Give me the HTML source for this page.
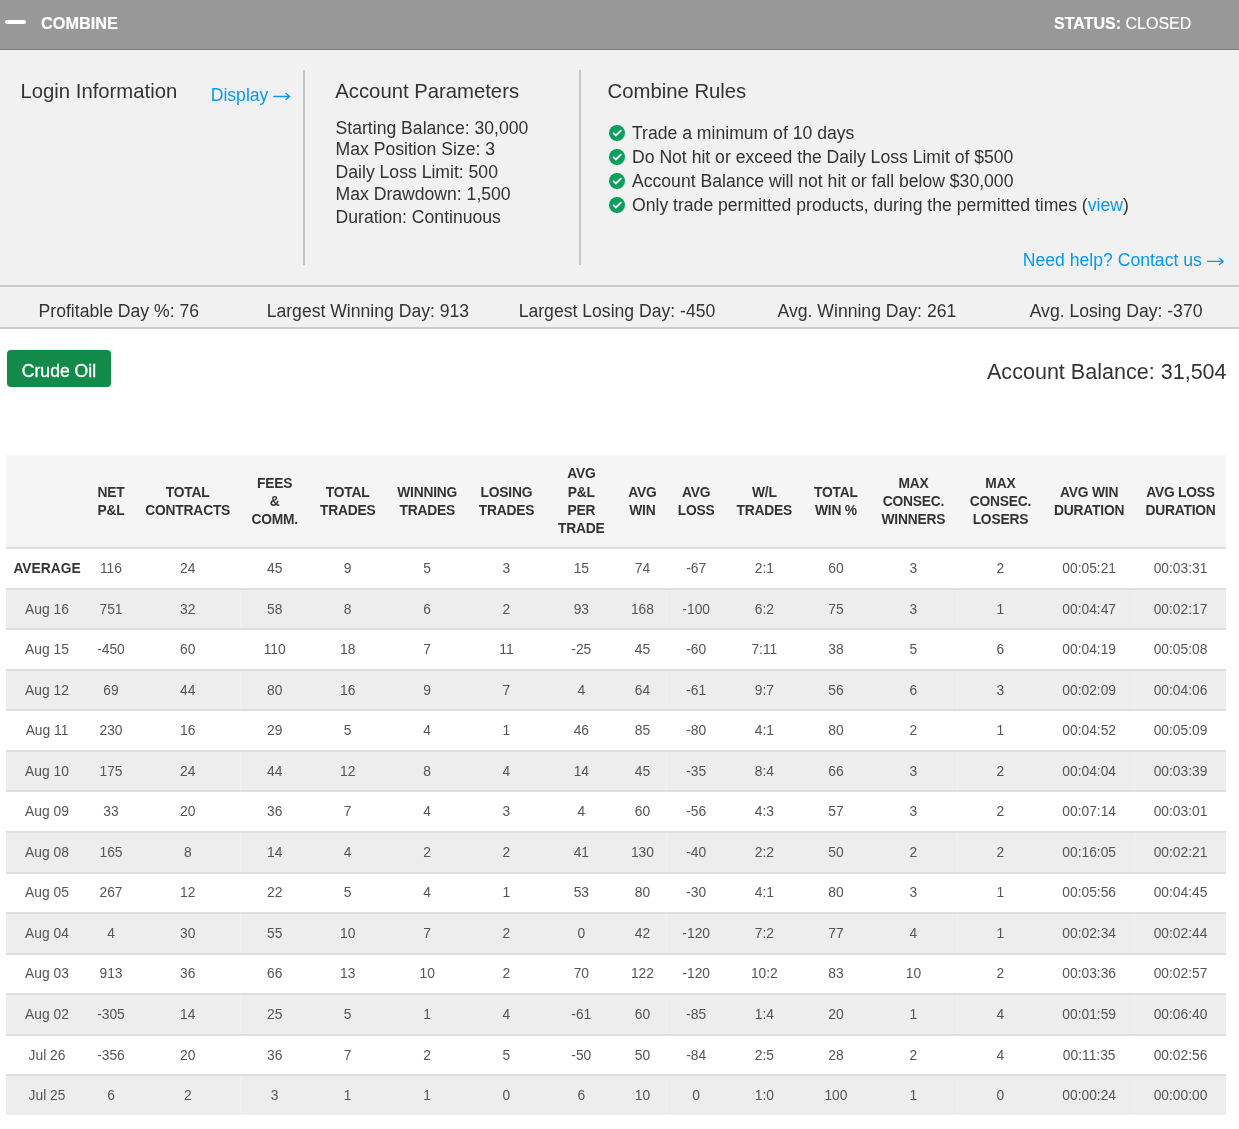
<!DOCTYPE html>
<html><head><meta charset="utf-8"><title>Combine</title><style>
html,body{margin:0;padding:0;width:1239px;height:1129px;overflow:hidden;background:#fff;font-family:"Liberation Sans",sans-serif;color:#333}
#root{position:absolute;left:0;top:0;width:1239px;height:1129px;will-change:transform}
.t{position:absolute;white-space:nowrap;line-height:normal}
table.g{border-collapse:separate;table-layout:fixed;border-spacing:0}
table.g th{background:#f5f5f5;height:94.2px;padding:0;font-size:13.8px;font-weight:700;color:#333;line-height:18.2px;letter-spacing:-0.2px;padding-top:1.6px;text-align:center;vertical-align:middle;border-bottom:2px solid #dedede;box-sizing:border-box}
table.g td{height:40.55px;padding:0;font-size:13.8px;color:#555;text-align:center;vertical-align:middle;border-bottom:2px solid #dedede;box-sizing:border-box}
table.g tr.k td{background:#ededed}
table.g tr:last-child td{border-bottom:none;height:38.5px}
table.g td:last-child,table.g th:last-child{padding-right:1.8px}
table.g td.avg{font-weight:700;color:#333}
</style></head><body><div id="root">
<div style="position:absolute;left:0;top:0;width:1239px;height:48.5px;background:#989898;border-bottom:1.5px solid #7b7b7b"></div>
<div style="position:absolute;left:5px;top:20px;width:21px;height:4.3px;background:#fff;border-radius:2.2px"></div>
<div class="t" style="left:41.00px;top:14.29px;font-size:16.25px;color:#fff;font-weight:700;-webkit-text-stroke:0.2px #fff">COMBINE</div>
<div class="t" style="left:1054.10px;top:14.62px;font-size:16px;color:#fff;font-weight:400;-webkit-text-stroke:0.2px #fff"><b>STATUS:</b> CLOSED</div>
<div style="position:absolute;left:0;top:50px;width:1239px;height:235.5px;background:#f1f1f1"></div>
<div style="position:absolute;left:0;top:285px;width:1239px;height:2px;background:#cbcbcb"></div>
<div style="position:absolute;left:0;top:287px;width:1239px;height:40px;background:#f1f1f1"></div>
<div style="position:absolute;left:0;top:327px;width:1239px;height:2px;background:#cbcbcb"></div>
<div class="t" style="left:20.50px;top:79.88px;font-size:20.3px;color:#333;font-weight:400;">Login Information</div>
<div class="t" style="left:210.70px;top:84.77px;font-size:17.6px;color:#0598f8;font-weight:400;">Display</div>
<svg style="position:absolute;left:273px;top:91px" width="20" height="12" viewBox="0 0 20 12"><path d="M0.80 5.50 H16.50 M13.00 2.40 L16.70 5.50 L13.00 8.60" stroke="#0598f8" stroke-width="1.35" fill="none" stroke-linecap="round" stroke-linejoin="round"/></svg>
<div style="position:absolute;left:303.4px;top:69.7px;width:1.5px;height:195px;background:#c4c4c4"></div>
<div class="t" style="left:335.30px;top:79.63px;font-size:20.3px;color:#333;font-weight:400;">Account Parameters</div>
<div class="t" style="left:335.60px;top:118.27px;font-size:17.6px;color:#333;font-weight:400;">Starting Balance: 30,000</div>
<div class="t" style="left:335.60px;top:138.57px;font-size:17.6px;color:#333;font-weight:400;">Max Position Size: 3</div>
<div class="t" style="left:335.60px;top:162.17px;font-size:17.6px;color:#333;font-weight:400;">Daily Loss Limit: 500</div>
<div class="t" style="left:335.60px;top:184.37px;font-size:17.6px;color:#333;font-weight:400;">Max Drawdown: 1,500</div>
<div class="t" style="left:335.60px;top:207.37px;font-size:17.6px;color:#333;font-weight:400;">Duration: Continuous</div>
<div style="position:absolute;left:579.2px;top:69.7px;width:1.5px;height:195px;background:#c4c4c4"></div>
<div class="t" style="left:607.60px;top:79.93px;font-size:20.3px;color:#333;font-weight:400;">Combine Rules</div>
<svg style="position:absolute;left:609.1px;top:125px" width="16" height="16" viewBox="0 0 16 16"><circle cx="8" cy="8" r="8" fill="#08a05a"/><path d="M4.1 7.9 L6.9 10.4 L12.3 5.1" stroke="#fff" stroke-width="1.9" fill="none"/></svg>
<div class="t" style="left:632.00px;top:123.07px;font-size:17.6px;color:#333;font-weight:400;">Trade a minimum of 10 days</div>
<svg style="position:absolute;left:609.1px;top:149px" width="16" height="16" viewBox="0 0 16 16"><circle cx="8" cy="8" r="8" fill="#08a05a"/><path d="M4.1 7.9 L6.9 10.4 L12.3 5.1" stroke="#fff" stroke-width="1.9" fill="none"/></svg>
<div class="t" style="left:632.00px;top:147.27px;font-size:17.6px;color:#333;font-weight:400;">Do Not hit or exceed the Daily Loss Limit of $500</div>
<svg style="position:absolute;left:609.1px;top:173px" width="16" height="16" viewBox="0 0 16 16"><circle cx="8" cy="8" r="8" fill="#08a05a"/><path d="M4.1 7.9 L6.9 10.4 L12.3 5.1" stroke="#fff" stroke-width="1.9" fill="none"/></svg>
<div class="t" style="left:632.00px;top:171.07px;font-size:17.6px;color:#333;font-weight:400;">Account Balance will not hit or fall below $30,000</div>
<svg style="position:absolute;left:609.1px;top:197px" width="16" height="16" viewBox="0 0 16 16"><circle cx="8" cy="8" r="8" fill="#08a05a"/><path d="M4.1 7.9 L6.9 10.4 L12.3 5.1" stroke="#fff" stroke-width="1.9" fill="none"/></svg>
<div class="t" style="left:632.00px;top:195.47px;font-size:17.6px;color:#333;font-weight:400;">Only trade permitted products, during the permitted times (<span style="color:#0598f8">view</span>)</div>
<div class="t" style="left:1022.80px;top:249.77px;font-size:17.6px;color:#0598f8;font-weight:400;">Need help? Contact us</div>
<svg style="position:absolute;left:1207px;top:256px" width="20" height="12" viewBox="0 0 20 12"><path d="M0.30 5.40 H16.00 M12.50 2.30 L16.20 5.40 L12.50 8.50" stroke="#0598f8" stroke-width="1.35" fill="none" stroke-linecap="round" stroke-linejoin="round"/></svg>
<div class="t" style="left:38.60px;top:300.77px;font-size:17.6px;color:#333;font-weight:400;">Profitable Day %: 76</div>
<div class="t" style="left:266.70px;top:300.77px;font-size:17.6px;color:#333;font-weight:400;">Largest Winning Day: 913</div>
<div class="t" style="left:518.70px;top:300.77px;font-size:17.6px;color:#333;font-weight:400;">Largest Losing Day: -450</div>
<div class="t" style="left:777.60px;top:300.77px;font-size:17.6px;color:#333;font-weight:400;">Avg. Winning Day: 261</div>
<div class="t" style="left:1029.70px;top:300.77px;font-size:17.6px;color:#333;font-weight:400;">Avg. Losing Day: -370</div>
<div style="position:absolute;left:6.8px;top:350px;width:104.6px;height:37px;background:#128a4a;border-radius:4px"></div>
<div class="t" style="left:21.80px;top:360.87px;font-size:17.6px;color:#fff;font-weight:400;-webkit-text-stroke:0.3px #fff">Crude Oil</div>
<div class="t" style="left:987.00px;top:358.70px;font-size:21.55px;color:#333;font-weight:400;">Account Balance: 31,504</div>
<table class="g" style="position:absolute;left:6.2px;top:455px;width:1220.0px">
<colgroup><col style="width:81.6px"><col style="width:46.4px"><col style="width:107.1px"><col style="width:66.9px"><col style="width:79.1px"><col style="width:79.9px"><col style="width:78.6px"><col style="width:71.2px"><col style="width:51px"><col style="width:56.5px"><col style="width:79.8px"><col style="width:63.4px"><col style="width:91.6px"><col style="width:82.4px"><col style="width:95.1px"><col style="width:89.4px"></colgroup>
<tr class="h"><th></th><th>NET<br>P&amp;L</th><th>TOTAL<br>CONTRACTS</th><th>FEES<br>&amp;<br>COMM.</th><th>TOTAL<br>TRADES</th><th>WINNING<br>TRADES</th><th>LOSING<br>TRADES</th><th>AVG<br>P&amp;L<br>PER<br>TRADE</th><th>AVG<br>WIN</th><th>AVG<br>LOSS</th><th>W/L<br>TRADES</th><th>TOTAL<br>WIN %</th><th>MAX<br>CONSEC.<br>WINNERS</th><th>MAX<br>CONSEC.<br>LOSERS</th><th>AVG WIN<br>DURATION</th><th>AVG LOSS<br>DURATION</th></tr>
<tr class="w"><td class="avg">AVERAGE</td><td>116</td><td>24</td><td>45</td><td>9</td><td>5</td><td>3</td><td>15</td><td>74</td><td>-67</td><td>2:1</td><td>60</td><td>3</td><td>2</td><td>00:05:21</td><td>00:03:31</td></tr>
<tr class="k"><td>Aug 16</td><td>751</td><td>32</td><td>58</td><td>8</td><td>6</td><td>2</td><td>93</td><td>168</td><td>-100</td><td>6:2</td><td>75</td><td>3</td><td>1</td><td>00:04:47</td><td>00:02:17</td></tr>
<tr class="w"><td>Aug 15</td><td>-450</td><td>60</td><td>110</td><td>18</td><td>7</td><td>11</td><td>-25</td><td>45</td><td>-60</td><td>7:11</td><td>38</td><td>5</td><td>6</td><td>00:04:19</td><td>00:05:08</td></tr>
<tr class="k"><td>Aug 12</td><td>69</td><td>44</td><td>80</td><td>16</td><td>9</td><td>7</td><td>4</td><td>64</td><td>-61</td><td>9:7</td><td>56</td><td>6</td><td>3</td><td>00:02:09</td><td>00:04:06</td></tr>
<tr class="w"><td>Aug 11</td><td>230</td><td>16</td><td>29</td><td>5</td><td>4</td><td>1</td><td>46</td><td>85</td><td>-80</td><td>4:1</td><td>80</td><td>2</td><td>1</td><td>00:04:52</td><td>00:05:09</td></tr>
<tr class="k"><td>Aug 10</td><td>175</td><td>24</td><td>44</td><td>12</td><td>8</td><td>4</td><td>14</td><td>45</td><td>-35</td><td>8:4</td><td>66</td><td>3</td><td>2</td><td>00:04:04</td><td>00:03:39</td></tr>
<tr class="w"><td>Aug 09</td><td>33</td><td>20</td><td>36</td><td>7</td><td>4</td><td>3</td><td>4</td><td>60</td><td>-56</td><td>4:3</td><td>57</td><td>3</td><td>2</td><td>00:07:14</td><td>00:03:01</td></tr>
<tr class="k"><td>Aug 08</td><td>165</td><td>8</td><td>14</td><td>4</td><td>2</td><td>2</td><td>41</td><td>130</td><td>-40</td><td>2:2</td><td>50</td><td>2</td><td>2</td><td>00:16:05</td><td>00:02:21</td></tr>
<tr class="w"><td>Aug 05</td><td>267</td><td>12</td><td>22</td><td>5</td><td>4</td><td>1</td><td>53</td><td>80</td><td>-30</td><td>4:1</td><td>80</td><td>3</td><td>1</td><td>00:05:56</td><td>00:04:45</td></tr>
<tr class="k"><td>Aug 04</td><td>4</td><td>30</td><td>55</td><td>10</td><td>7</td><td>2</td><td>0</td><td>42</td><td>-120</td><td>7:2</td><td>77</td><td>4</td><td>1</td><td>00:02:34</td><td>00:02:44</td></tr>
<tr class="w"><td>Aug 03</td><td>913</td><td>36</td><td>66</td><td>13</td><td>10</td><td>2</td><td>70</td><td>122</td><td>-120</td><td>10:2</td><td>83</td><td>10</td><td>2</td><td>00:03:36</td><td>00:02:57</td></tr>
<tr class="k"><td>Aug 02</td><td>-305</td><td>14</td><td>25</td><td>5</td><td>1</td><td>4</td><td>-61</td><td>60</td><td>-85</td><td>1:4</td><td>20</td><td>1</td><td>4</td><td>00:01:59</td><td>00:06:40</td></tr>
<tr class="w"><td>Jul 26</td><td>-356</td><td>20</td><td>36</td><td>7</td><td>2</td><td>5</td><td>-50</td><td>50</td><td>-84</td><td>2:5</td><td>28</td><td>2</td><td>4</td><td>00:11:35</td><td>00:02:56</td></tr>
<tr class="k"><td>Jul 25</td><td>6</td><td>2</td><td>3</td><td>1</td><td>1</td><td>0</td><td>6</td><td>10</td><td>0</td><td>1:0</td><td>100</td><td>1</td><td>0</td><td>00:00:24</td><td>00:00:00</td></tr>
</table>
<div style="position:absolute;left:240px;top:589.75px;width:1px;height:38.55px;background:#f1f1f1"></div>
<div style="position:absolute;left:666px;top:589.75px;width:1px;height:38.55px;background:#f1f1f1"></div>
<div style="position:absolute;left:957px;top:589.75px;width:1px;height:38.55px;background:#f1f1f1"></div>
<div style="position:absolute;left:1134px;top:589.75px;width:1px;height:38.55px;background:#f1f1f1"></div>
<div style="position:absolute;left:240px;top:670.85px;width:1px;height:38.55px;background:#f1f1f1"></div>
<div style="position:absolute;left:666px;top:670.85px;width:1px;height:38.55px;background:#f1f1f1"></div>
<div style="position:absolute;left:957px;top:670.85px;width:1px;height:38.55px;background:#f1f1f1"></div>
<div style="position:absolute;left:1134px;top:670.85px;width:1px;height:38.55px;background:#f1f1f1"></div>
<div style="position:absolute;left:240px;top:751.95px;width:1px;height:38.55px;background:#f1f1f1"></div>
<div style="position:absolute;left:666px;top:751.95px;width:1px;height:38.55px;background:#f1f1f1"></div>
<div style="position:absolute;left:957px;top:751.95px;width:1px;height:38.55px;background:#f1f1f1"></div>
<div style="position:absolute;left:1134px;top:751.95px;width:1px;height:38.55px;background:#f1f1f1"></div>
<div style="position:absolute;left:240px;top:833.05px;width:1px;height:38.55px;background:#f1f1f1"></div>
<div style="position:absolute;left:666px;top:833.05px;width:1px;height:38.55px;background:#f1f1f1"></div>
<div style="position:absolute;left:957px;top:833.05px;width:1px;height:38.55px;background:#f1f1f1"></div>
<div style="position:absolute;left:1134px;top:833.05px;width:1px;height:38.55px;background:#f1f1f1"></div>
<div style="position:absolute;left:240px;top:914.15px;width:1px;height:38.55px;background:#f1f1f1"></div>
<div style="position:absolute;left:666px;top:914.15px;width:1px;height:38.55px;background:#f1f1f1"></div>
<div style="position:absolute;left:957px;top:914.15px;width:1px;height:38.55px;background:#f1f1f1"></div>
<div style="position:absolute;left:1134px;top:914.15px;width:1px;height:38.55px;background:#f1f1f1"></div>
<div style="position:absolute;left:240px;top:995.25px;width:1px;height:38.55px;background:#f1f1f1"></div>
<div style="position:absolute;left:666px;top:995.25px;width:1px;height:38.55px;background:#f1f1f1"></div>
<div style="position:absolute;left:957px;top:995.25px;width:1px;height:38.55px;background:#f1f1f1"></div>
<div style="position:absolute;left:1134px;top:995.25px;width:1px;height:38.55px;background:#f1f1f1"></div>
<div style="position:absolute;left:240px;top:1076.35px;width:1px;height:38.5px;background:#f1f1f1"></div>
<div style="position:absolute;left:666px;top:1076.35px;width:1px;height:38.5px;background:#f1f1f1"></div>
<div style="position:absolute;left:957px;top:1076.35px;width:1px;height:38.5px;background:#f1f1f1"></div>
<div style="position:absolute;left:1134px;top:1076.35px;width:1px;height:38.5px;background:#f1f1f1"></div>
</div></body></html>
